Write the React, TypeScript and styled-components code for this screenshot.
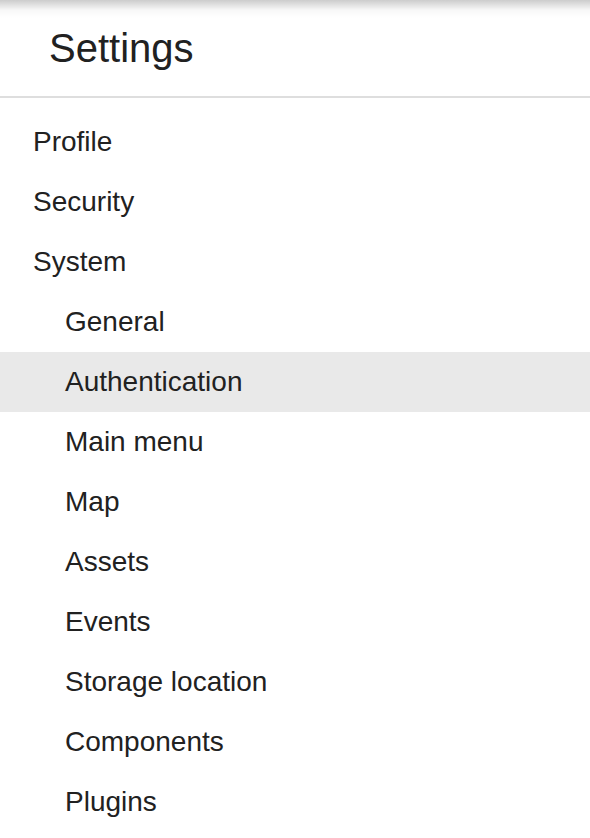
import styled, { createGlobalStyle } from "styled-components";

const GlobalStyle = createGlobalStyle`
  html, body {
    margin: 0;
    padding: 0;
    background: #fff;
    font-family: "Liberation Sans", Arial, sans-serif;
    color: #212121;
  }
`;

const Page = styled.div`
  width: 590px;
  min-height: 838px;
  background: #fff;
`;

const Header = styled.header`
  height: 98px;
  box-sizing: border-box;
  padding: 25px 0 0 49px;
  border-bottom: 2px solid #dedede;
  background: linear-gradient(to bottom, rgba(0, 0, 0, 0.2), rgba(0, 0, 0, 0.03) 10px, rgba(0, 0, 0, 0) 18px), #fff;
`;

const Title = styled.h1`
  margin: 0;
  font-size: 40px;
  font-weight: 400;
  line-height: 46px;
`;

const Menu = styled.ul`
  list-style: none;
  margin: 0;
  padding: 14px 0 0;
`;

const Item = styled.li<{ $level: number; $active?: boolean }>`
  height: 60px;
  line-height: 60px;
  font-size: 28px;
  padding-left: ${(p) => (p.$level === 2 ? 65 : 33)}px;
  background: ${(p) => (p.$active ? "#e9e9e9" : "transparent")};
  white-space: nowrap;
`;

const items = [
  { label: "Profile", level: 1 },
  { label: "Security", level: 1 },
  { label: "System", level: 1 },
  { label: "General", level: 2 },
  { label: "Authentication", level: 2, active: true },
  { label: "Main menu", level: 2 },
  { label: "Map", level: 2 },
  { label: "Assets", level: 2 },
  { label: "Events", level: 2 },
  { label: "Storage location", level: 2 },
  { label: "Components", level: 2 },
  { label: "Plugins", level: 2 },
];

const App = () => {
  return (
    <Page>
      <GlobalStyle />
      <Header>
        <Title>Settings</Title>
      </Header>
      <Menu>
        {items.map((item) => (
          <Item key={item.label} $level={item.level} $active={item.active}>
            {item.label}
          </Item>
        ))}
      </Menu>
    </Page>
  );
};

export default App;
